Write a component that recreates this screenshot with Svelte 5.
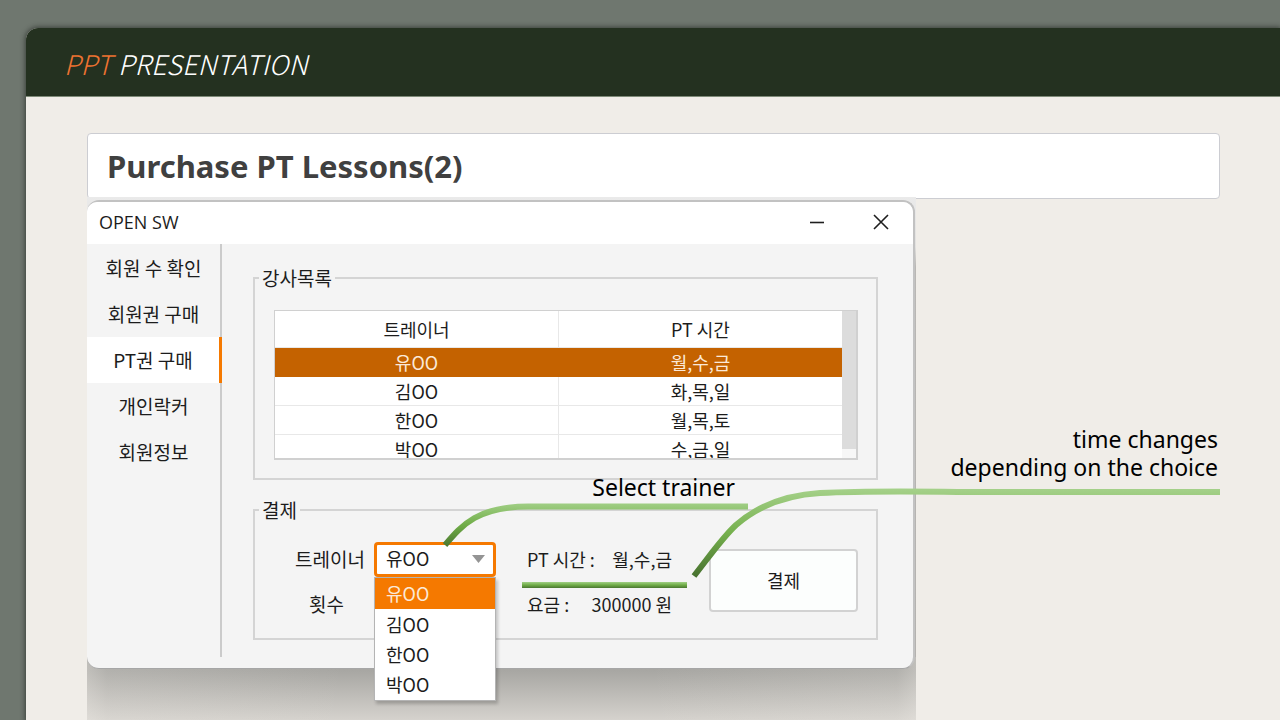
<script>
  const menu = ['회원 수 확인', '회원권 구매', 'PT권 구매', '개인락커', '회원정보'];
  const trainers = [
    { name: '유OO', days: '월,수,금' },
    { name: '김OO', days: '화,목,일' },
    { name: '한OO', days: '월,목,토' },
    { name: '박OO', days: '수,금,일' }
  ];
  let page = $state('PT권 구매');
  let trainer = $state('유OO');
  let current = $derived(trainers.find((t) => t.name === trainer));
</script>

<div class="sheet">
  <header>
    <p class="brand"><span>PPT</span> PRESENTATION</p>
  </header>

  <main>
    <h1>Purchase PT Lessons(2)</h1>

    <div class="shot">
      <section class="window" aria-label="OPEN SW">
        <div class="titlebar">
          <h2>OPEN SW</h2>
          <button class="wbtn" aria-label="Minimize">
            <svg width="16" height="16" viewBox="0 0 16 16"><path d="M1 8.500H15" /></svg>
          </button>
          <button class="wbtn" aria-label="Close">
            <svg width="16" height="16" viewBox="0 0 16 16"><path d="M1 1L15 15M15 1L1 15" /></svg>
          </button>
        </div>

        <div class="body">
          <nav>
            {#each menu as item}
              <button class:active={item === page} onclick={() => (page = item)}>{item}</button>
            {/each}
          </nav>

          <div class="panels">
            <fieldset class="list">
              <legend>강사목록</legend>
              <div class="scroller">
                <table>
                  <thead>
                    <tr><th>트레이너</th><th>PT 시간</th></tr>
                  </thead>
                  <tbody>
                    {#each trainers as t}
                      <tr class:selected={t.name === trainer}><td>{t.name}</td><td>{t.days}</td></tr>
                    {/each}
                  </tbody>
                </table>
                <div class="track"><div class="thumb"></div></div>
              </div>
            </fieldset>

            <fieldset class="pay">
              <legend>결제</legend>
              <div class="payrow">
                <div class="fields">
                  <label for="trainer">트레이너</label>
                  <div class="combo">
                    <select id="trainer" bind:value={trainer}>
                      {#each trainers as t}
                        <option value={t.name}>{t.name}</option>
                      {/each}
                    </select>
                    <svg class="arrow" width="13" height="8" viewBox="0 0 13 8"><path d="M0 0H13L6.500 8Z" /></svg>
                    <div class="options">
                      {#each trainers as t}
                        <button class:on={t.name === trainer} onclick={() => (trainer = t.name)}>{t.name}</button>
                      {/each}
                    </div>
                  </div>
                  <span class="count">횟수</span>
                </div>
                <div class="info">
                  <p><span>PT 시간 :</span><span>{current.days}</span></p>
                  <p><span>요금 :</span><span>300000 원</span></p>
                </div>
                <button class="submit">결제</button>
              </div>
            </fieldset>
          </div>
        </div>
      </section>
      <div class="shade"></div>

      <svg class="lines" width="1133" height="523" viewBox="0 0 1133 523" aria-hidden="true">
        <defs>
          <linearGradient id="g1" gradientUnits="userSpaceOnUse" x1="0" y1="306" x2="0" y2="350">
            <stop offset="0" stop-color="#a1cf86" /><stop offset="0.5" stop-color="#70ad47" /><stop offset="1" stop-color="#4a7630" />
          </linearGradient>
          <linearGradient id="g2" gradientUnits="userSpaceOnUse" x1="0" y1="290" x2="0" y2="382">
            <stop offset="0" stop-color="#a7d28c" /><stop offset="0.5" stop-color="#75b04d" /><stop offset="1" stop-color="#456e2d" />
          </linearGradient>
          <linearGradient id="g3" gradientUnits="userSpaceOnUse" x1="0" y1="385" x2="0" y2="391">
            <stop offset="0" stop-color="#a1cf86" /><stop offset="0.5" stop-color="#70ad47" /><stop offset="1" stop-color="#4a7630" />
          </linearGradient>
        </defs>
        <path d="M358 348C375 328 391 309 443 309.500L661 309.500" stroke="url(#g1)" />
        <path d="M607 379C622 360 635 341 649 328C673 307 701 298 733 296C790 293 850 295 900 295L1133 295" stroke="url(#g2)" />
        <path d="M435 385H600V391H435Z" fill="url(#g3)" class="bar" />
      </svg>
      <p class="note first">Select trainer</p>
      <p class="note second">time changes<br />depending on the choice</p>
    </div>
  </main>
</div>

<style>
  :global(body) {
    margin: 0;
    background: #6f776f;
    overflow: hidden;
    font-family: 'Noto Sans CJK KR', sans-serif;
    font-size: 18px;
    color: #1c1c1c;
  }
  * { box-sizing: border-box; }
  h1, h2, p { margin: 0; font-weight: 400; }
  button, select { font: inherit; color: inherit; border: 0; padding: 0; background: none; }

  .sheet {
    display: flex;
    flex-direction: column;
    min-height: calc(100vh - 28px);
    margin: 28px 0 0 26px;
    border-radius: 12px 0 0 0;
    background: #f0ede8;
    box-shadow: 0 0 5px 1px rgba(30, 35, 30, 0.65);
  }
  header {
    display: flex;
    align-items: center;
    height: 69px;
    padding: 2px 38px 0;
    border-radius: 12px 0 0 0;
    border-bottom: 1px solid #7e8a78;
    background: #243120;
  }
  .brand {
    font-weight: 300;
    font-size: 27px;
    font-style: italic;
    color: #fff;
  }
  .brand span { color: #ed7331; }
  main {
    flex: 1;
    display: flex;
    flex-direction: column;
    padding: 36px 60px 0 61px;
  }
  h1 {
    height: 66px;
    padding-left: 19px;
    border: 1px solid #cccdd2;
    border-radius: 4px;
    background: #fff;
    font-family: 'Noto Sans', sans-serif;
    font-size: 31px;
    line-height: 64px;
    font-weight: 700;
    color: #404040;
  }

  .shot {
    position: relative;
    flex: 1;
    display: flex;
    flex-direction: column;
    max-width: 829px;
    margin-top: -2px;
    padding-top: 3px;
    background: linear-gradient(#eaeaea, #e2e1df 50px, #b9b7b4 70px, #b3b1ae);
  }
  .window {
    position: relative;
    z-index: 1;
    margin-right: 1px;
    border: solid #c2c2c2;
    border-width: 2px 2px 1px 0;
    border-bottom-color: #a6a6a6;
    border-radius: 12px;
    background: #f4f4f4;
  }
  .titlebar {
    display: flex;
    align-items: center;
    height: 42px;
    padding: 0 24px 2px 12px;
    border-radius: 10px 10px 0 0;
    background: #fff;
  }
  h2 { flex: 1; font-family: 'Open Sans', sans-serif; font-size: 18px; }
  .wbtn { width: 16px; height: 16px; margin-left: 48px; }
  .wbtn svg { display: block; fill: none; stroke: #1e1e1e; stroke-width: 1.6; }
  .body { display: flex; padding-bottom: 11px; }
  nav {
    width: 135px;
    padding-top: 1px;
    border-right: 2px solid #cbcbcb;
    font-size: 19px;
  }
  nav button {
    display: block;
    width: 100%;
    height: 46px;
    line-height: 46px;
  }
  nav .active {
    width: 135px;
    background: #fff;
    border-right: 3px solid #f57900;
  }
  .panels { flex: 1; padding: 20px 35px 17px 31px; }
  fieldset {
    min-width: 0;
    margin: 0;
    padding: 18px 18px 18px 4px;
    border: 2px solid #d4d4d4;
  }
  legend { padding: 0 3px; font-size: 19px; line-height: 28px; }
  .scroller {
    display: flex;
    height: 150px;
    margin-left: 15px;
    overflow: hidden;
    border: solid #d0d0d0;
    border-width: 1px 2px 2px 1px;
    background: #fff;
  }
  table { flex: 1; width: 100%; height: 153px; border-collapse: collapse; table-layout: fixed; }
  th, td { padding: 0; font-weight: 400; text-align: center; line-height: 28px; height: 29px; border-bottom: 1px solid #e8e8e8; }
  th { height: 36px; }
  th + th, td + td { border-left: 1px solid #e8e8e8; }
  .selected td { background: #c46200; border-color: #c46200; color: #fbe9d8; }
  .track { flex: none; width: 14px; background: #f7f7f7; }
  .thumb { height: 138px; background: #dcdcdc; }

  .pay { margin-top: 16px; padding-bottom: 16px; }
  .payrow { display: flex; padding-left: 36px; }
  .fields {
    display: grid;
    grid-template-columns: 70px 122px;
    grid-template-rows: 35px 35px;
    gap: 10px 9px;
    line-height: 34px;
  }
  .fields label, .count { font-size: 19px; }
  .count { padding-left: 14px; }
  .combo { position: relative; height: 35px; }
  select {
    display: block;
    appearance: none;
    width: 100%;
    height: 35px;
    padding: 0 9px 4px;
    border: 3px solid #f57900;
    border-radius: 4px;
    background: #fff;
    line-height: 24px;
  }
  .arrow { position: absolute; right: 11px; top: 13px; fill: #949494; }
  .options {
    position: absolute;
    z-index: 2;
    top: 35px;
    left: 0;
    width: 100%;
    padding-bottom: 1px;
    border: 1px solid #b4b4b4;
    background: #fff;
    box-shadow: 2px 3px 3px rgba(0, 0, 0, 0.2);
  }
  .options button {
    display: block;
    width: 100%;
    height: 30px;
    padding-left: 11px;
    text-align: left;
    line-height: 30px;
  }
  .options .on { height: 31px; padding-bottom: 2px; background: #f57900; color: #fbe9d8; }
  .info { width: 145px; margin-left: 31px; }
  .info p { display: flex; justify-content: space-between; height: 35px; line-height: 35px; white-space: nowrap; }
  .info p + p { margin-top: 10px; }
  .submit {
    width: 149px;
    height: 63px;
    margin: 7px 0 0 auto;
    padding-bottom: 2px;
    border: 2px solid #d2d2d2;
    border-radius: 4px;
    background: #fcfefd;
  }

  .shade {
    flex: 1;
    min-height: 64px;
    margin-top: -12px;
    background:
      linear-gradient(90deg, rgba(240, 237, 232, 0.35), rgba(240, 237, 232, 0.15) 20px, transparent 260px, transparent 560px, rgba(240, 237, 232, 0.15) 810px, rgba(240, 237, 232, 0.35)),
      linear-gradient(#a5a4a0, #a8a7a3 14px, #d6d3ce 64px);
  }
  .lines { position: absolute; z-index: 3; left: 0; top: 0; fill: none; stroke-width: 6; pointer-events: none; }
  .bar { stroke: none; }
  .note {
    position: absolute;
    z-index: 3;
    font-family: 'Noto Sans', sans-serif;
    font-size: 23px;
    line-height: 28px;
    color: #000;
    text-align: right;
    white-space: nowrap;
  }
  .first { top: 276px; right: 181px; }
  .second { top: 228px; right: -302px; }
</style>
